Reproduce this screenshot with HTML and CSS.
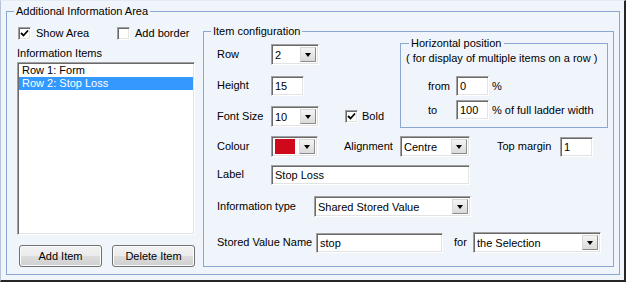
FILE: index.html
```html
<!DOCTYPE html>
<html>

<head>
    <meta charset="utf-8" />
    <title>Additional Information Area</title>
    <link rel="stylesheet" href="styles.css">
</head>

<body>
    <div class="window">
        <fieldset class="group outer">
            <legend>Additional Information Area</legend>
            <div class="outer-body">

                <div class="items-col">
                    <div class="checks">
                        <label class="check first"><span class="box"><svg width="9" height="9" viewBox="0 0 9 9"><polyline points="1,4 3.5,6.5 8,1.5" fill="none" stroke="#000" stroke-width="1.8"/></svg></span>Show Area</label>
                        <label class="check"><span class="box"></span>Add border</label>
                    </div>
                    <div class="caption">Information Items</div>
                    <ul class="listbox">
                        <li>Row 1: Form</li>
                        <li class="selected">Row 2: Stop Loss</li>
                    </ul>
                    <div class="buttons">
                        <button type="button">Add Item</button>
                        <button type="button">Delete Item</button>
                    </div>
                </div>

                <fieldset class="group config">
                    <legend>Item configuration</legend>
                    <div class="config-body">

                        <div class="top">
                            <div class="fields">
                                <div class="row">
                                    <span class="lbl">Row</span>
                                    <div class="field combo w48"><span class="val">2</span><span class="drop"></span></div>
                                </div>
                                <div class="row">
                                    <span class="lbl">Height</span>
                                    <div class="field w33">15</div>
                                </div>
                                <div class="row">
                                    <span class="lbl">Font Size</span>
                                    <div class="field combo w48"><span class="val">10</span><span class="drop"></span></div>
                                    <label class="check bold"><span class="box"><svg width="9" height="9" viewBox="0 0 9 9"><polyline points="1,4 3.5,6.5 8,1.5" fill="none" stroke="#000" stroke-width="1.8"/></svg></span>Bold</label>
                                </div>
                            </div>

                            <fieldset class="group hpos">
                                <legend>Horizontal position</legend>
                                <div class="hpos-body">
                                    <div class="note">( for display of multiple items on a row )</div>
                                    <div class="hrow from">
                                        <span class="hlbl">from</span>
                                        <div class="field w33">0</div>
                                        <span class="unit">%</span>
                                    </div>
                                    <div class="hrow to">
                                        <span class="hlbl">to</span>
                                        <div class="field w33">100</div>
                                        <span class="unit">% of full ladder width</span>
                                    </div>
                                </div>
                            </fieldset>
                        </div>

                        <div class="row colour-row">
                            <span class="lbl">Colour</span>
                            <div class="field combo colour"><span class="swatch"></span><span class="drop"></span></div>
                            <span class="lbl-align">Alignment</span>
                            <div class="field combo w70"><span class="val">Centre</span><span class="drop"></span></div>
                            <span class="lbl-margin">Top margin</span>
                            <div class="field w33">1</div>
                        </div>

                        <div class="row label-row">
                            <span class="lbl">Label</span>
                            <div class="field w199">Stop Loss</div>
                        </div>

                        <div class="row info-row">
                            <span class="lbl wide">Information type</span>
                            <div class="field combo w157"><span class="val">Shared Stored Value</span><span class="drop"></span></div>
                        </div>

                        <div class="row stored-row">
                            <span class="lbl wider">Stored Value Name</span>
                            <div class="field w127">stop</div>
                            <span class="lbl-for">for</span>
                            <div class="field combo w128"><span class="val">the Selection</span><span class="drop"></span></div>
                        </div>

                    </div>
                </fieldset>

            </div>
        </fieldset>
    </div>
</body>

</html>
```

FILE: styles.css
```css
body {
    margin: 0;
    font: 11px/13px "Liberation Sans", Arial, sans-serif;
    color: #000;
}

.window {
    width: 626px;
    height: 282px;
    box-sizing: border-box;
    border-style: solid;
    border-width: 1px 2px 2px 1px;
    border-color: #e4ebf5 #262626 #262626 #b8c4d6;
    background-color: #f0f5fb;
    padding: 4px 4px 5px 5px;
    display: flex;
}

/* group boxes */

.group {
    margin: 0;
    padding: 0;
    border: solid 1px #8aa6d2;
    min-width: 0;
}

.group > legend {
    padding: 0 2px;
    margin-left: 7px;
    line-height: 13px;
}

.outer {
    flex: 1;
}

.outer-body {
    display: flex;
    padding: 0 5px 0 10px;
}

.items-col {
    width: 178px;
}

.config {
    flex: 1;
    margin: 7px 0 0 8px;
    height: 242px;
    box-sizing: border-box;
}

.hpos > legend {
    margin-left: 8px;
}

/* checkboxes */

.checks {
    display: flex;
    height: 13px;
    margin-top: 9px;
}

.check {
    display: flex;
    align-items: center;
    gap: 5px;
    height: 13px;
}

.check.first {
    width: 99px;
    margin-left: 1px;
}

.box {
    width: 13px;
    height: 13px;
    box-sizing: border-box;
    background-color: #fff;
    border: solid 1px;
    border-color: #a0a0a0 #fff #fff #a0a0a0;
    box-shadow: inset 1px 1px 0 #696969, inset -1px -1px 0 #e3e3e3;
    display: flex;
    align-items: center;
    justify-content: center;
}

.box svg {
    display: block;
}

.caption {
    margin-top: 7px;
}

/* list box */

.listbox {
    list-style-type: none;
    margin: 2px 0 0;
    padding: 0;
    height: 173px;
    box-sizing: border-box;
    background-color: #fff;
    border: solid 1px;
    border-color: #a0a0a0 #fff #fff #a0a0a0;
    box-shadow: inset 1px 1px 0 #696969, inset -1px -1px 0 #e3e3e3;
    padding: 1px;
}

.listbox li {
    padding-left: 3px;
    height: 13px;
}

.listbox li.selected {
    background-color: #3399ff;
    color: #fff;
}

.buttons {
    display: flex;
    gap: 10px;
    margin: 10px 0 0 2px;
}

button {
    width: 83px;
    height: 22px;
    padding: 0;
    font: inherit;
    color: #000;
    border: solid 1px #707070;
    border-radius: 3px;
    background: linear-gradient(#f2f2f2 0%, #ebebeb 50%, #dddddd 50%, #cfcfcf 100%);
    box-shadow: inset 0 0 0 1px #fcfcfc;
}

/* item configuration */

.config-body {
    padding: 6px 0 0 13px;
}

.top {
    display: flex;
}

.fields {
    width: 183px;
}

.row {
    display: flex;
    align-items: center;
    height: 21px;
}

.fields .row + .row {
    margin-top: 10px;
}

.lbl {
    width: 54px;
}

.lbl.wide {
    width: 97px;
}

.lbl.wider {
    width: 99px;
}

.field {
    height: 20px;
    box-sizing: border-box;
    background-color: #fff;
    border: solid 1px;
    border-color: #a0a0a0 #fff #fff #a0a0a0;
    box-shadow: inset 1px 1px 0 #696969, inset -1px -1px 0 #e3e3e3;
    padding-left: 3px;
    line-height: 18px;
    white-space: nowrap;
}

.combo {
    height: 21px;
    display: flex;
    align-items: center;
    padding-right: 2px;
}

.combo .val {
    flex: 1;
}

.drop {
    width: 16px;
    height: 15px;
    box-sizing: border-box;
    border: solid 1px;
    border-color: #d8d8d8 #8c8c8c #8c8c8c #d8d8d8;
    background: linear-gradient(#f4f4f4, #dadada);
    display: flex;
    align-items: center;
    justify-content: center;
    margin-left: auto;
}

.drop::after {
    content: "";
    border-left: 3px solid transparent;
    border-right: 3px solid transparent;
    border-top: 4px solid #000;
    margin-top: 1px;
}

.w33 { width: 33px; }
.w48 { width: 48px; }
.w70 { width: 70px; }
.w127 { width: 127px; }
.w128 { width: 128px; }
.w157 { width: 157px; }
.w199 { width: 199px; }

.colour {
    width: 47px;
    padding-left: 3px;
}

.swatch {
    width: 20px;
    height: 15px;
    background-color: #d0091a;
}

.check.bold {
    margin-left: 26px;
    gap: 4px;
}

.colour-row {
    margin-top: 8px;
}

.lbl-align {
    width: 56px;
    margin-left: 26px;
}

.lbl-margin {
    width: 63px;
    margin-left: 27px;
}

.label-row {
    margin-top: 7px;
}

.info-row {
    margin-top: 11px;
}

.stored-row {
    margin-top: 15px;
}

.lbl-for {
    width: 19px;
    margin-left: 11px;
}

/* horizontal position */

.hpos {
    width: 208px;
    margin-top: -7px;
    box-sizing: border-box;
}

.hpos-body {
    padding: 2px 0 7px 5px;
}

.hrow {
    display: flex;
    align-items: center;
    height: 20px;
    padding-left: 22px;
}

.hrow.from {
    margin-top: 11px;
}

.hrow.to {
    margin-top: 4px;
}

.hlbl {
    width: 28px;
}

.unit {
    margin-left: 3px;
}
```
